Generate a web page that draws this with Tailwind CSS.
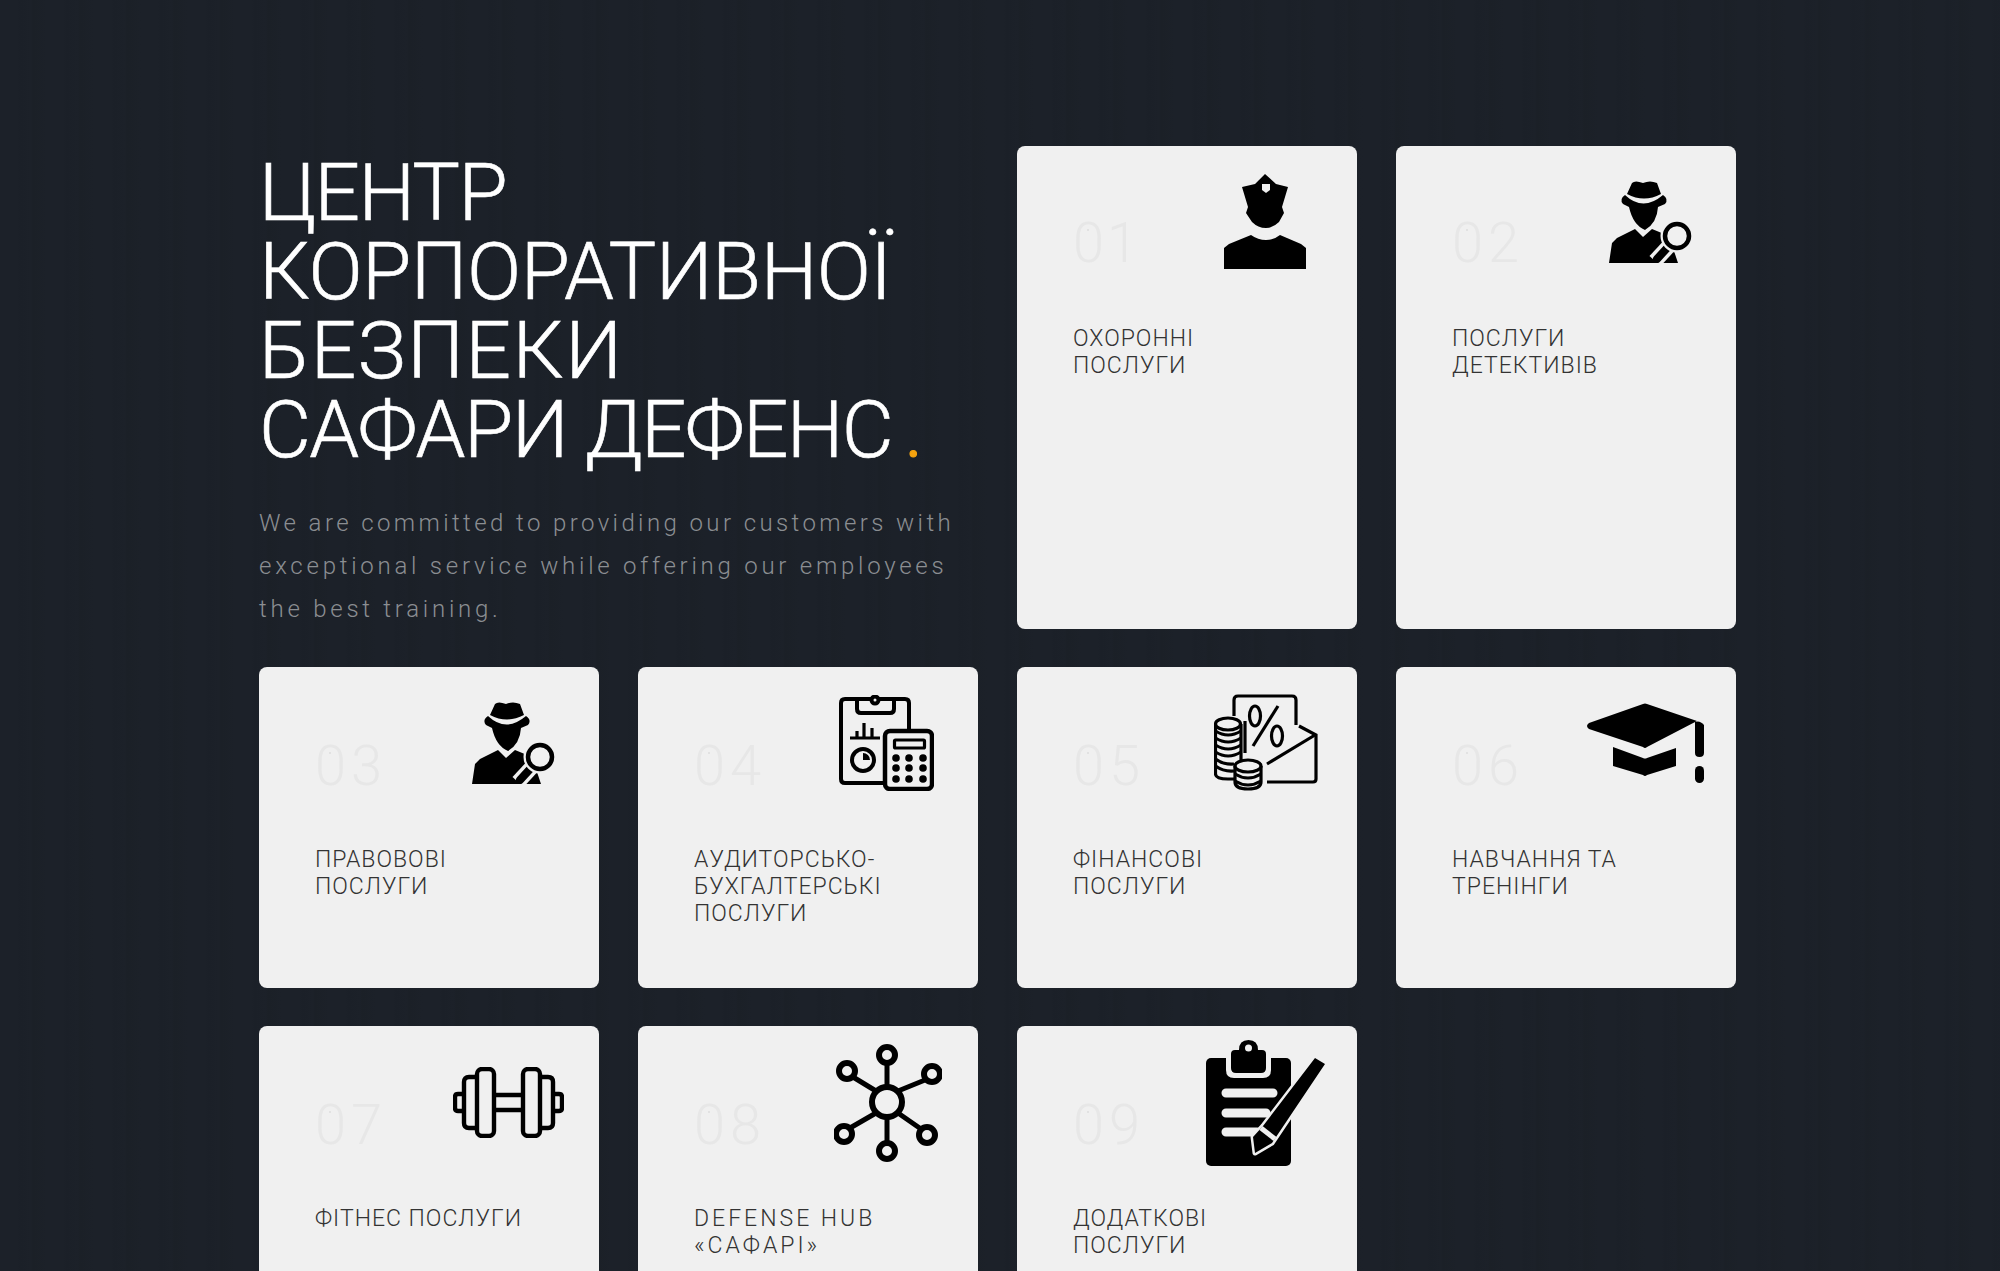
<!DOCTYPE html>
<html lang="uk">
<head>
  <meta charset="UTF-8" />
  <title>Сафари Дефенс</title>
  <script src="https://cdn.jsdelivr.net/npm/@tailwindcss/browser@4"></script>
</head>
<body class="h-screen overflow-hidden bg-[#1c2129] bg-[repeating-linear-gradient(90deg,#1c2129_0px,#1c2129_17px,#1b2028_20px,#1c2129_31px,#1b2027_33px,#1c2129_47px)] font-[Roboto,sans-serif]">

  <main class="grid grid-cols-[repeat(4,340px)] grid-rows-[483px_321px_322px] gap-x-[39px] gap-y-[38px] pt-[146px] pl-[259px]">

    <!-- INTRO -->
    <section class="col-span-2 pt-[8px]">
      <h1 class="text-[80px] leading-[79px] font-light text-white [-webkit-text-stroke:0.6px_white]">
        <span class="block tracking-[-1.6px]">ЦЕНТР</span>
        <span class="block tracking-[-0.5px]">КОРПОРАТИВНОЇ</span>
        <span class="block tracking-[1.6px]">БЕЗПЕКИ</span>
        <span class="block tracking-[-1.6px]">САФАРИ ДЕФЕНС<span class="ml-[12px] text-[#f5a30f] [-webkit-text-stroke:1px_#f5a30f]">.</span></span>
      </h1>
      <p class="mt-[32px] text-[24px] leading-[43px] font-light tracking-[3.4px] text-[#8b8e92]">We are committed to providing our customers with <span class="tracking-[3.75px]">exceptional service while offering our employees the best training.</span></p>
    </section>

    <!-- 01 -->
    <article class="relative rounded-lg bg-[#f0f0f0] px-[56px]">
      <svg class="absolute top-[28px] right-[51px] w-[82px] h-[95px]" viewBox="0 0 82 95" fill="#000">
        <path d="M41 0 L52 10 L64 13 L58 33 L60 39 L55 48 Q49 54 42 54 Q34 54 28 48 L22 39 L24 33 L18 13 L31 10 Z" />
        <path d="M38 10 H46 V16 L42 19 L38 16 Z" fill="#f0f0f0" />
        <path d="M0 95 V74 L5 70 L27 61 Q34 66 42 66 Q50 66 56 61 L77 70 L82 74 V95 Z" />
      </svg>
      <div class="mt-[77px] text-[56px] leading-[40px] font-light tracking-[3px] text-[#e7e7e7]"><span class="relative">0<span class="absolute left-[14px] top-[19px] size-[2px] rounded-full bg-[#dedede]"></span></span>1</div>
      <h2 class="mt-[62px] text-[23px] leading-[27px] font-light tracking-[1px] text-[#333]">ОХОРОННІ ПОСЛУГИ</h2>
    </article>

    <!-- 02 -->
    <article class="relative rounded-lg bg-[#f0f0f0] px-[56px]">
      <svg class="absolute top-[35px] right-[44px] w-[83px] h-[82px]" viewBox="0 0 83 82" fill="#000">
        <path d="M18 13 L23 2 Q26 -1 34 2 Q41 -1 48 2 L52 13 Q35 22 18 13 Z" />
        <path d="M16 14 Q34 31 54 14 Q60 18 56 23 L49 26 Q48 42 36 49 Q24 44 20 26 L14 23 Q10 18 16 14 Z" />
        <path d="M0 82 L3 62 L8 57 L26 48 L34 56 L43 48 L60 55 L69 82 Z" />
        <path d="M59 66 L46 80" stroke="#f0f0f0" stroke-width="15" />
        <path d="M59 66 L48 78" stroke="#000" stroke-width="8" stroke-linecap="round" />
        <circle cx="68" cy="55" r="12" fill="#f0f0f0" stroke="#f0f0f0" stroke-width="9" />
        <circle cx="68" cy="55" r="12" fill="#f0f0f0" stroke="#000" stroke-width="4.5" />
      </svg>
      <div class="mt-[77px] text-[56px] leading-[40px] font-light tracking-[5px] text-[#e7e7e7]"><span class="relative">0<span class="absolute left-[14px] top-[19px] size-[2px] rounded-full bg-[#dedede]"></span></span>2</div>
      <h2 class="mt-[62px] text-[23px] leading-[27px] font-light tracking-[1px] text-[#333]">ПОСЛУГИ ДЕТЕКТИВІВ</h2>
    </article>

    <!-- 03 -->
    <article class="relative rounded-lg bg-[#f0f0f0] px-[56px]">
      <svg class="absolute top-[35px] right-[44px] w-[83px] h-[82px]" viewBox="0 0 83 82" fill="#000">
        <path d="M18 13 L23 2 Q26 -1 34 2 Q41 -1 48 2 L52 13 Q35 22 18 13 Z" />
        <path d="M16 14 Q34 31 54 14 Q60 18 56 23 L49 26 Q48 42 36 49 Q24 44 20 26 L14 23 Q10 18 16 14 Z" />
        <path d="M0 82 L3 62 L8 57 L26 48 L34 56 L43 48 L60 55 L69 82 Z" />
        <path d="M59 66 L46 80" stroke="#f0f0f0" stroke-width="15" />
        <path d="M59 66 L48 78" stroke="#000" stroke-width="8" stroke-linecap="round" />
        <circle cx="68" cy="55" r="12" fill="#f0f0f0" stroke="#f0f0f0" stroke-width="9" />
        <circle cx="68" cy="55" r="12" fill="#f0f0f0" stroke="#000" stroke-width="4.5" />
      </svg>
      <div class="mt-[79px] text-[56px] leading-[40px] font-light tracking-[5px] text-[#e7e7e7]"><span class="relative">0<span class="absolute left-[14px] top-[19px] size-[2px] rounded-full bg-[#dedede]"></span></span>3</div>
      <h2 class="mt-[60px] text-[23px] leading-[27px] font-light tracking-[1px] text-[#333]">ПРАВОВОВІ ПОСЛУГИ</h2>
    </article>

    <!-- 04 -->
    <article class="relative rounded-lg bg-[#f0f0f0] px-[56px]">
      <svg class="absolute top-[28px] right-[44px] w-[95px] h-[96px]" viewBox="0 0 95 96" fill="none" stroke="#000" stroke-width="4">
        <path d="M46 88 H6 Q2 88 2 84 V8 Q2 4 6 4 H66 Q70 4 70 8 V35" />
        <path d="M18 4 V14 Q18 18 22 18 H51 Q55 18 55 14 V4" />
        <circle cx="36" cy="5" r="3.5" fill="#f0f0f0" />
        <path d="M11 43 H41 M18 42 V36 M25 42 V28 M33 42 V33" stroke-width="3.2" />
        <circle cx="24" cy="65" r="11" />
        <path d="M24 65 V58 A7 7 0 0 1 31 65 Z" fill="#000" stroke="none" />
        <rect x="46" y="36" width="47" height="58" rx="5" fill="#f0f0f0" stroke-width="4.5" />
        <rect x="55.5" y="45" width="30" height="8" rx="1" stroke-width="3.2" />
        <g fill="#000" stroke="none">
          <circle cx="57" cy="63" r="3.8" /><circle cx="70" cy="63" r="3.8" /><circle cx="84" cy="63" r="3.8" />
          <circle cx="57" cy="73" r="3.8" /><circle cx="70" cy="73" r="3.8" /><circle cx="84" cy="73" r="3.8" />
          <circle cx="57" cy="84" r="3.8" /><circle cx="70" cy="84" r="3.8" /><circle cx="84" cy="84" r="3.8" />
        </g>
      </svg>
      <div class="mt-[79px] text-[56px] leading-[40px] font-light tracking-[5px] text-[#e7e7e7]"><span class="relative">0<span class="absolute left-[14px] top-[19px] size-[2px] rounded-full bg-[#dedede]"></span></span>4</div>
      <h2 class="mt-[60px] text-[23px] leading-[27px] font-light tracking-[1px] text-[#333]">АУДИТОРСЬКО-БУХГАЛТЕРСЬКІ ПОСЛУГИ</h2>
    </article>

    <!-- 05 -->
    <article class="relative rounded-lg bg-[#f0f0f0] px-[56px]">
      <svg class="absolute top-[27px] right-[39px] w-[104px] h-[97px]" viewBox="0 0 104 97" fill="none" stroke="#000" stroke-width="3.2">
        <path d="M20 22 V6 Q20 2 24 2 H78 Q82 2 82 6 V31" />
        <path d="M31 27 V59" />
        <path d="M85 32 L102 41 V85 Q102 88 99 88 H53" />
        <path d="M53 70 L101 41" />
        <ellipse cx="41" cy="22" rx="5.5" ry="10" />
        <ellipse cx="63" cy="42" rx="5.5" ry="10" />
        <path d="M64 12 L39 52" />
        <path d="M1.5 30 V80 Q1.5 85 14 85 H22" />
        <path d="M27 30 V66" />
        <ellipse cx="14" cy="30" rx="12.5" ry="6" fill="#f0f0f0" />
        <path d="M1.5 37 Q14 45 27 37 M1.5 44 Q14 52 27 44 M1.5 51 Q14 59 27 51 M1.5 58 Q14 66 27 58 M1.5 65 Q10 71 20 70 M1.5 72 Q10 78 20 77" />
        <path d="M21 72 V88 Q21 95 34 95 Q47 95 47 88 V72" fill="#f0f0f0" />
        <ellipse cx="34" cy="72" rx="13" ry="6" fill="#f0f0f0" />
        <path d="M21 80 Q34 88 47 80 M21 87 Q34 95 47 87" />
      </svg>
      <div class="mt-[79px] text-[56px] leading-[40px] font-light tracking-[5px] text-[#e7e7e7]"><span class="relative">0<span class="absolute left-[14px] top-[19px] size-[2px] rounded-full bg-[#dedede]"></span></span>5</div>
      <h2 class="mt-[60px] text-[23px] leading-[27px] font-light tracking-[1px] text-[#333]">ФІНАНСОВІ ПОСЛУГИ</h2>
    </article>

    <!-- 06 -->
    <article class="relative rounded-lg bg-[#f0f0f0] px-[56px]">
      <svg class="absolute top-[36px] right-[32px] w-[118px] h-[80px]" viewBox="0 0 118 80" fill="#000">
        <path d="M57 1 Q59 0 61 1 L111 18 L61 44 Q59 46 57 44 L3 26 Q-1 23 3 20 Z" />
        <path d="M27 44 L57 55 Q59 56 61 55 L90 45 V63 L61 72 Q59 74 57 72 L27 63 Z" />
        <path d="M109 19 Q114 17 118 22 V50 Q118 54 113.5 54 Q109 54 109 50 Z" />
        <rect x="109" y="63" width="9" height="17" rx="4.5" />
      </svg>
      <div class="mt-[79px] text-[56px] leading-[40px] font-light tracking-[5px] text-[#e7e7e7]"><span class="relative">0<span class="absolute left-[14px] top-[19px] size-[2px] rounded-full bg-[#dedede]"></span></span>6</div>
      <h2 class="mt-[60px] text-[23px] leading-[27px] font-light tracking-[1px] text-[#333]">НАВЧАННЯ ТА ТРЕНІНГИ</h2>
    </article>

    <!-- 07 -->
    <article class="relative rounded-lg bg-[#f0f0f0] px-[56px]">
      <svg class="absolute top-[41px] right-[35px] w-[111px] h-[71px]" viewBox="0 0 111 71" fill="none" stroke="#000" stroke-width="4.4">
        <rect x="24" y="2" width="17" height="67" rx="5" />
        <rect x="70" y="2" width="17" height="67" rx="5" />
        <path d="M24 10 H16 Q11 10 11 15 V56 Q11 61 16 61 H24" />
        <path d="M87 10 H95 Q100 10 100 15 V56 Q100 61 95 61 H87" />
        <path d="M11 27 H5 Q2 27 2 30 V41 Q2 44 5 44 H11" />
        <path d="M100 27 H106 Q109 27 109 30 V41 Q109 44 106 44 H100" />
        <path d="M41 28 H70 M41 43 H70" />
      </svg>
      <div class="mt-[79px] text-[56px] leading-[40px] font-light tracking-[5px] text-[#e7e7e7]"><span class="relative">0<span class="absolute left-[14px] top-[19px] size-[2px] rounded-full bg-[#dedede]"></span></span>7</div>
      <h2 class="mt-[60px] text-[23px] leading-[27px] font-light tracking-[1px] text-[#333]">ФІТНЕС ПОСЛУГИ</h2>
    </article>

    <!-- 08 -->
    <article class="relative rounded-lg bg-[#f0f0f0] px-[56px]">
      <svg class="absolute top-[18px] right-[36px] w-[108px] h-[118px]" viewBox="0 0 108 118" fill="none" stroke="#000" stroke-width="5">
        <path d="M53 43 V19 M53 73 V99 M42 47 L19 33 M64 47 L91 36 M42 69 L16 84 M64 69 L87 85" />
        <circle cx="53" cy="58" r="15" stroke-width="6" />
        <circle cx="53" cy="11" r="8" stroke-width="6" />
        <circle cx="13" cy="27" r="8" stroke-width="6" />
        <circle cx="98" cy="30" r="8" stroke-width="6" />
        <circle cx="10" cy="90" r="8" stroke-width="6" />
        <circle cx="93" cy="91" r="8" stroke-width="6" />
        <circle cx="53" cy="107" r="8" stroke-width="6" />
      </svg>
      <div class="mt-[79px] text-[56px] leading-[40px] font-light tracking-[5px] text-[#e7e7e7]"><span class="relative">0<span class="absolute left-[14px] top-[19px] size-[2px] rounded-full bg-[#dedede]"></span></span>8</div>
      <h2 class="mt-[60px] text-[23px] leading-[27px] font-light tracking-[3px] text-[#333]">DEFENSE HUB «САФАРІ»</h2>
    </article>

    <!-- 09 -->
    <article class="relative rounded-lg bg-[#f0f0f0] px-[56px]">
      <svg class="absolute top-[14px] right-[32px] w-[119px] h-[126px]" viewBox="0 0 119 126" fill="#000">
        <rect x="0" y="18" width="85" height="108" rx="5" />
        <path d="M20 14 H65 V30 Q65 38 57 38 H28 Q20 38 20 30 Z" fill="#f0f0f0" />
        <path d="M25 14 Q25 10 29 10 H33 Q33 0 42.5 0 Q52 0 52 10 H56 Q60 10 60 14 V28 Q60 33 55 33 H30 Q25 33 25 28 Z" />
        <circle cx="42.5" cy="8" r="3.5" fill="#f0f0f0" />
        <path d="M20 53 H67 M20 73 H60 M20 92 H51" stroke="#f0f0f0" stroke-width="9" stroke-linecap="round" />
        <path d="M109 18 L119 24 L66 103 L49 113 L47 97 L57 86 Z" stroke="#f0f0f0" stroke-width="5" stroke-linejoin="round" paint-order="stroke" />
        <path d="M55 88 L69 99" stroke="#f0f0f0" stroke-width="5" />
      </svg>
      <div class="mt-[79px] text-[56px] leading-[40px] font-light tracking-[5px] text-[#e7e7e7]"><span class="relative">0<span class="absolute left-[14px] top-[19px] size-[2px] rounded-full bg-[#dedede]"></span></span>9</div>
      <h2 class="mt-[60px] text-[23px] leading-[27px] font-light tracking-[1px] text-[#333]">ДОДАТКОВІ ПОСЛУГИ</h2>
    </article>

  </main>

</body>
</html>
